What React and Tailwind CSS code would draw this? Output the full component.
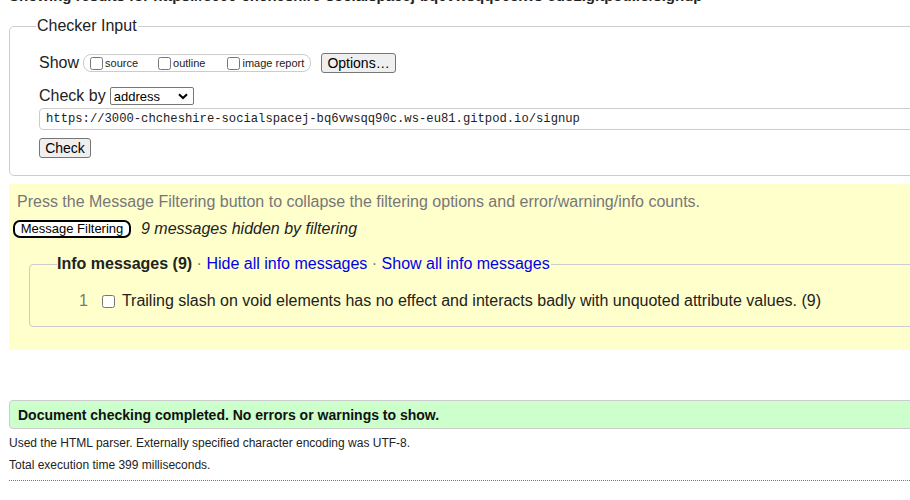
import React from "react";

function Chevron() {
  return (
    <svg width="10" height="7" viewBox="0 0 10 7" className="ml-auto mr-[5px]">
      <path d="M1 1.2 L5 5 L9 1.2" fill="none" stroke="#000" strokeWidth="2" />
    </svg>
  );
}

function Box({ label }) {
  return (
    <label className="flex items-center">
      <input type="checkbox" className="m-0 w-[13px] h-[13px]" />
      <span className="ml-[2px] text-[11px] leading-[13px] text-[#222]">{label}</span>
    </label>
  );
}

export default function App() {
  return (
    <div className="w-[910px] h-[500px] overflow-hidden bg-white font-['Liberation_Sans',Arial,sans-serif] text-[#222]">
      <div className="w-[980px] pl-[9px]">
        <div className="mt-[-14px] h-[21px] leading-[20px] text-[15px] font-bold whitespace-nowrap">
          Showing results for https://3000-chcheshire-socialspacej-bq6vwsqq90c.ws-eu81.gitpod.io/signup
        </div>

        <fieldset className="mt-[10px] border border-[#ccc] rounded-l-[5px] pl-[29px] pt-[17px] pb-[17px]">
          <legend className="ml-[-3px] px-[1px] text-[16px] leading-[18px] text-[#222]">Checker Input</legend>
          <div className="flex items-center h-[22px]">
            <span className="text-[16px] leading-[18px]">Show</span>
            <div className="ml-[4px] h-[18px] w-[228px] border border-[#ccc] rounded-[8px] flex items-center pl-[6px]">
              <Box label="source" />
              <div className="w-[20px]" />
              <Box label="outline" />
              <div className="w-[22px]" />
              <Box label="image report" />
            </div>
            <button className="ml-[10px] h-[20px] w-[75px] bg-[#efefef] border border-[#767676] rounded-[3px] text-[14px] leading-[16px] text-black">
              Options…
            </button>
          </div>
          <div className="flex items-center h-[20px] mt-[12px]">
            <span className="text-[16px] leading-[18px]">Check by</span>
            <div className="ml-[4px] h-[18px] w-[84px] border border-[#767676] rounded-[2px] flex items-center bg-white">
              <span className="pl-[3px] text-[13px] leading-[15px] text-black">address</span>
              <Chevron />
            </div>
          </div>
          <div className="mt-[2px] h-[22px] border border-[#ccc] rounded-l-[4px] flex items-center pl-[6px]">
            <span className="font-['Liberation_Mono',monospace] text-[12.2px] leading-[14px] text-[#222] whitespace-nowrap">
              https://3000-chcheshire-socialspacej-bq6vwsqq90c.ws-eu81.gitpod.io/signup
            </span>
          </div>
          <div className="mt-[8px] flex">
            <button className="h-[20px] w-[52px] bg-[#efefef] border border-[#767676] rounded-[3px] text-[14px] leading-[16px] text-black">
              Check
            </button>
          </div>
        </fieldset>

        <div className="mt-[8px] bg-[#ffffcc] pl-[8px] pt-[9px] pb-[23px]">
          <div className="text-[16px] leading-[18px] text-[#777] whitespace-nowrap">
            Press the Message Filtering button to collapse the filtering options and error/warning/info counts.
          </div>
          <div className="mt-[8px] h-[20px] flex items-center ml-[-4px]">
            <button className="h-[18px] w-[118px] bg-white border-2 border-black rounded-[7px] text-[13px] leading-[14px] text-black">
              Message Filtering
            </button>
            <span className="ml-[10px] italic text-[16px] leading-[18px] text-[#222]">9 messages hidden by filtering</span>
          </div>
          <fieldset className="mt-[16px] ml-[12px] border border-[#ccc] rounded-l-[4px] pl-[27px] pt-[18px] pb-[15px]">
            <legend className="ml-[0px] px-0 text-[16px] leading-[18px] whitespace-nowrap">
              <span className="font-bold text-[#222]">Info messages (9)</span>
              <span className="text-[#777]"> · </span>
              <span className="text-[#0000ee]">Hide all info messages</span>
              <span className="text-[#777]"> · </span>
              <span className="text-[#0000ee]">Show all info messages</span>
              <span className="pr-[1px]"></span>
            </legend>
            <div className="flex items-center h-[20px]">
              <span className="ml-[22px] text-[16px] leading-[18px] text-[#777]">1</span>
              <input type="checkbox" className="ml-[14px] m-0 w-[13px] h-[13px]" />
              <span className="ml-[7px] text-[16px] leading-[18px] text-[#222] whitespace-nowrap">
                Trailing slash on void elements has no effect and interacts badly with unquoted attribute values. (9)
              </span>
            </div>
          </fieldset>
        </div>

        <div className="mt-[50px] h-[29px] bg-[#ccffcc] border border-[#ccc] rounded-l-[4px] flex items-center pl-[8px]">
          <span className="font-bold text-[14px] leading-[16px] text-[#111]">
            Document checking completed. No errors or warnings to show.
          </span>
        </div>
        <div className="mt-[6px] text-[12px] leading-[16px] text-[#222]">
          Used the HTML parser. Externally specified character encoding was UTF-8.
        </div>
        <div className="mt-[6px] text-[12px] leading-[16px] text-[#222]">
          Total execution time 399 milliseconds.
        </div>
        <div className="mt-[7px] border-t border-dotted border-[#777]" />
      </div>
    </div>
  );
}
